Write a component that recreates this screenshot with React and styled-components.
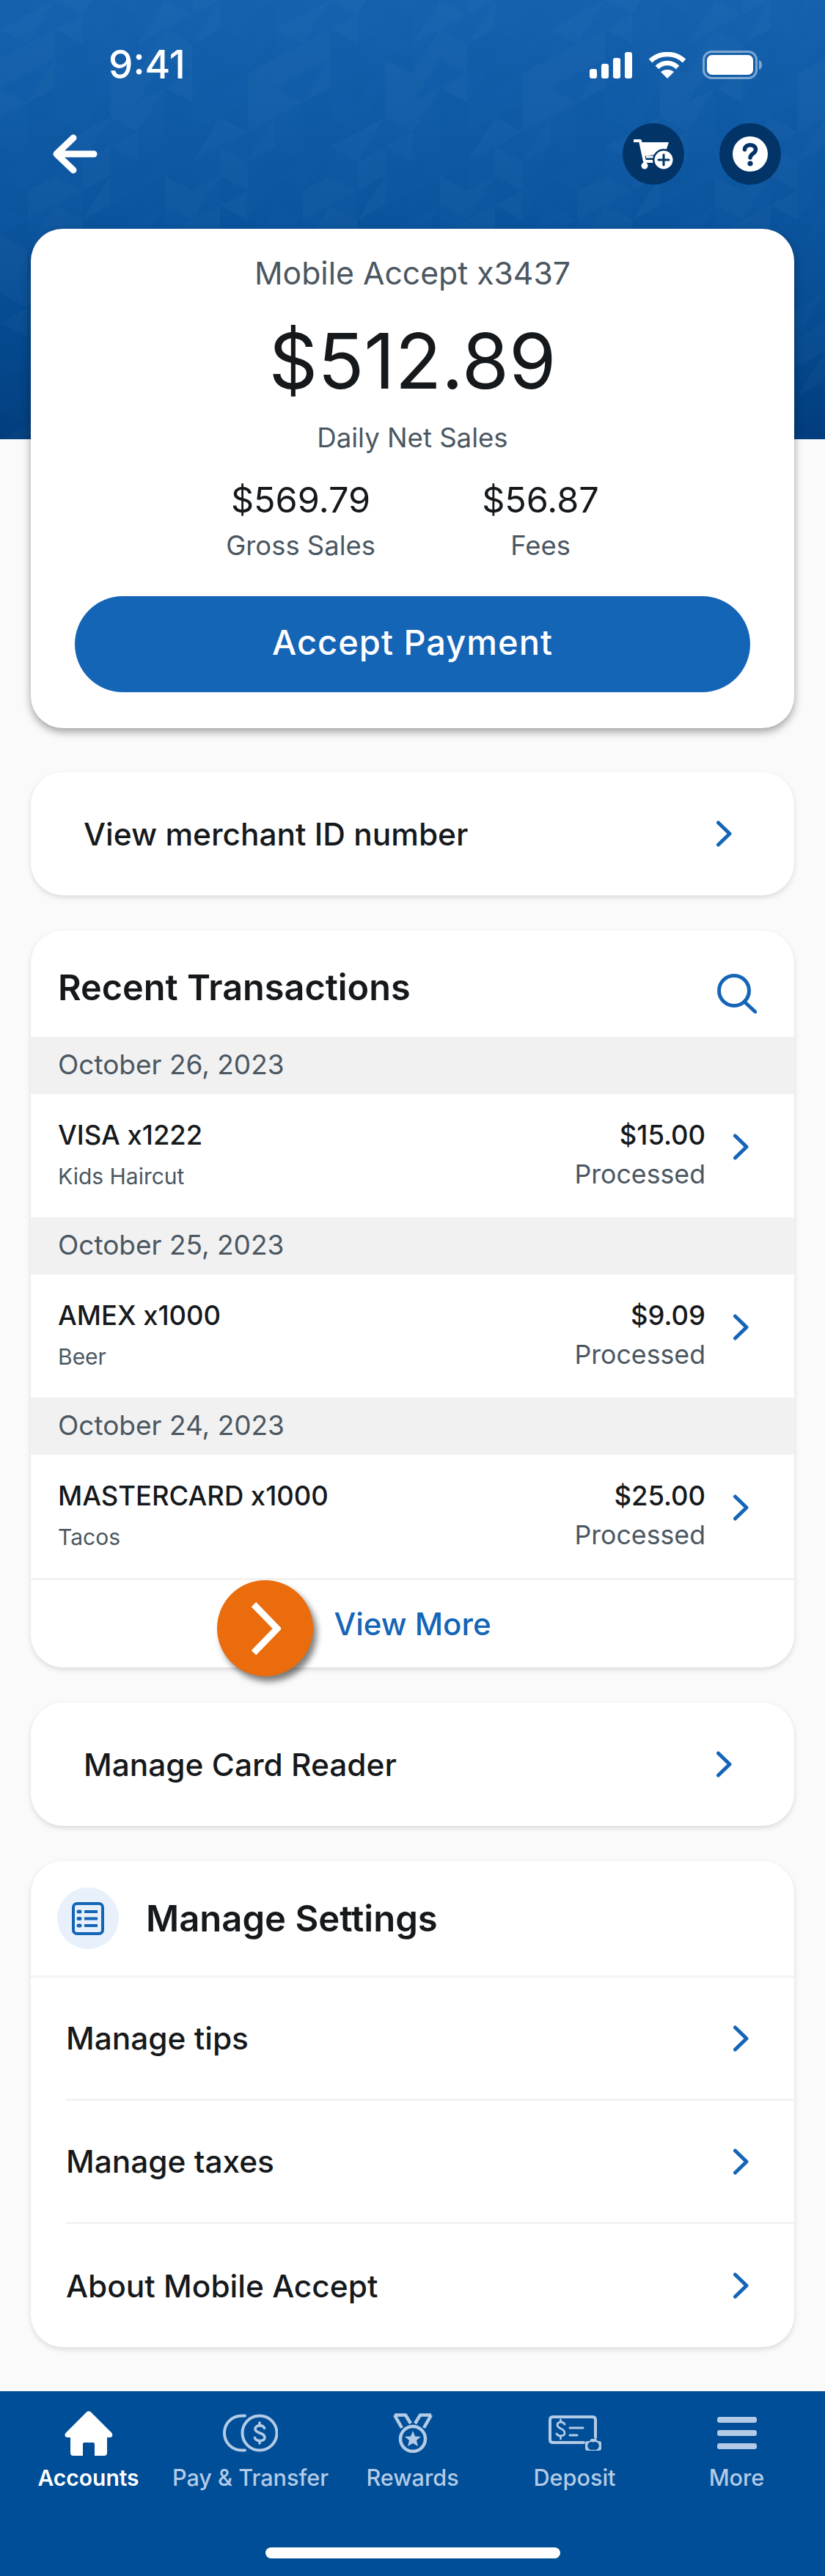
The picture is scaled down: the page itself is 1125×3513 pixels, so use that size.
import React from 'react';
import styled, { createGlobalStyle } from 'styled-components';

const GlobalStyle = createGlobalStyle`
  html, body {
    margin: 0;
    padding: 0;
    background: #fafafa;
  }
  body {
    font-family: Inter, "Noto Sans", sans-serif;
    color: #16191c;
  }
`;

const Page = styled.div`
  width: 1125px;
  min-height: 3513px;
  display: flex;
  flex-direction: column;
  background: #fafafa;
`;

const Hero = styled.header`
  position: relative;
  height: 599px;
  overflow: hidden;
  background: linear-gradient(180deg, #1662af 0%, #0c559f 50%, #054a8f 78%, #033e7e 100%);
`;

const HeroPattern = styled.svg`
  position: absolute;
  inset: 0;
  width: 100%;
  height: 100%;
`;

const StatusBar = styled.div`
  position: relative;
  height: 39px;
  padding: 69px 86px 0 148px;
  display: flex;
  align-items: center;
  justify-content: space-between;
`;

const Clock = styled.span`
  color: #fff;
  font-size: 53px;
  font-weight: 500;
  line-height: 39px;
`;

const StatusIcons = styled.div`
  display: flex;
  align-items: center;
  gap: 22px;
`;

const NavBar = styled.div`
  position: relative;
  margin-top: 60px;
  padding: 0 60px 0 72px;
  display: flex;
  align-items: center;
  justify-content: space-between;
`;

const NavActions = styled.div`
  display: flex;
  gap: 48px;
`;

const RoundAction = styled.div`
  width: 84px;
  height: 84px;
  border-radius: 50%;
  background: #033468;
  display: flex;
  align-items: center;
  justify-content: center;
`;

const Cards = styled.main`
  position: relative;
  margin-top: -287px;
  padding: 0 42px;
  display: flex;
  flex-direction: column;
  gap: 48px;
`;

const Card = styled.section`
  position: relative;
  background: #fff;
  border-radius: 44px;
  box-shadow: 0 3px 7px rgba(0, 0, 0, 0.13);
`;

const SummaryCard = styled(Card)`
  height: 681px;
  margin-bottom: 12px;
  display: flex;
  flex-direction: column;
  align-items: center;
  box-shadow: 0 5px 12px rgba(0, 0, 0, 0.36);
`;

const SummaryName = styled.div`
  margin-top: 36px;
  font-size: 42.7px;
  line-height: 50px;
  color: #4b5761;
`;

const SummaryTotal = styled.div`
  margin-top: 39px;
  font-size: 104px;
  line-height: 110px;
  color: #16191c;
`;

const SummaryCaption = styled.div`
  margin-top: 25px;
  font-size: 36.6px;
  line-height: 50px;
  color: #4b5761;
`;

const SummaryStats = styled.div`
  width: 100%;
  margin-top: 30px;
  display: flex;
`;

const Stat = styled.div`
  width: ${(p) => p.$width}px;
  margin-left: ${(p) => p.$left}px;
  display: flex;
  flex-direction: column;
  align-items: center;
`;

const StatValue = styled.div`
  font-size: 48.6px;
  line-height: 60px;
  color: #16191c;
`;

const StatLabel = styled.div`
  margin-top: 9px;
  font-size: 36.4px;
  line-height: 46px;
  color: #4b5761;
`;

const AcceptButton = styled.button`
  width: 921px;
  height: 131px;
  margin-top: 46px;
  padding: 0 0 6px;
  border: none;
  border-radius: 66px;
  background: #1565b7;
  color: #fff;
  font-family: inherit;
  font-size: 47px;
  font-weight: 550;
  letter-spacing: 1px;
`;

const LinkRow = styled.div`
  height: 168px;
  padding: 0 85px 0 72px;
  display: flex;
  align-items: center;
  justify-content: space-between;
  font-size: 42.4px;
  font-weight: 450;
`;

const CardHeader = styled.div`
  height: 145px;
  padding: 0 51px 0 37px;
  display: flex;
  align-items: center;
  justify-content: space-between;
`;

const CardTitle = styled.h2`
  margin: 10px 0 0;
  font-size: 48.6px;
  font-weight: 600;
`;

const SearchSlot = styled.div`
  display: flex;
  margin-top: 26px;
`;

const DateBand = styled.div`
  height: 75px;
  padding: 0 0 3px 37px;
  display: flex;
  align-items: center;
  background: #f1f1f2;
  font-size: 37px;
  color: #4b5761;
`;

const TxnRow = styled.div`
  height: 168px;
  padding: 0 62px 0 37px;
  display: flex;
  align-items: center;
`;

const TxnText = styled.div`
  flex: 1;
  display: flex;
  flex-direction: column;
`;

const TxnAmounts = styled.div`
  display: flex;
  flex-direction: column;
  align-items: flex-end;
  margin-right: 37px;
`;

const TxnTitle = styled.div`
  font-size: 36.4px;
  line-height: 56px;
  color: #16191c;
  font-weight: 450;
`;

const TxnNote = styled.div`
  font-size: 30px;
  line-height: 56px;
  color: #4b5761;
`;

const TxnStatus = styled.div`
  margin: -3px 0 3px;
  font-size: 35.7px;
  line-height: 56px;
  color: #4b5761;
`;

const ChevronSlot = styled.div`
  display: flex;
  margin-top: -24px;
`;

const ViewMoreRow = styled.div`
  position: relative;
  height: 119px;
  border-top: 3px solid #f2f2f2;
  display: flex;
  align-items: center;
  justify-content: center;
  font-size: 42px;
  font-weight: 450;
  color: #1565b7;
`;

const OrangeBubble = styled.div`
  position: absolute;
  left: 254px;
  top: 0;
  width: 131px;
  height: 131px;
  border-radius: 50%;
  background: #ea6c0c;
  box-shadow: 5px 7px 9px rgba(0, 0, 0, 0.5);
  display: flex;
  align-items: center;
  justify-content: center;
`;

const SettingsHeader = styled.div`
  height: 156px;
  padding-left: 36px;
  display: flex;
  align-items: center;
  gap: 37px;
  border-bottom: 3px solid #f2f2f2;
`;

const SettingsTitle = styled.h2`
  margin: 0;
  font-size: 49px;
  font-weight: 600;
`;

const IconBubble = styled.div`
  width: 84px;
  height: 84px;
  border-radius: 50%;
  background: #e8f1fb;
  display: flex;
  align-items: center;
  justify-content: center;
`;

const SettingsRow = styled.div`
  height: ${(p) => (p.$last ? 168 : 165)}px;
  margin-left: 48px;
  padding-right: 62px;
  display: flex;
  align-items: center;
  justify-content: space-between;
  font-size: 42.4px;
  font-weight: 450;
  border-bottom: ${(p) => (p.$last ? 'none' : '3px solid #f2f2f2')};
`;

const TabBar = styled.nav`
  margin-top: auto;
  height: 252px;
  box-sizing: border-box;
  padding: 26px 10px 0;
  background: #004e97;
`;

const TabRow = styled.div`
  display: grid;
  grid-template-columns: repeat(5, 1fr);
`;

const Tab = styled.div`
  display: flex;
  flex-direction: column;
  align-items: center;
  color: ${(p) => (p.$active ? '#fff' : '#b3cbe6')};
`;

const TabIcon = styled.div`
  height: 62px;
  display: flex;
  align-items: center;
  justify-content: center;
`;

const TabLabel = styled.div`
  margin-top: 10px;
  font-size: ${(p) => (p.$active ? 30 : 30.6)}px;
  line-height: 40px;
  font-weight: ${(p) => (p.$active ? 600 : 500)};
  white-space: nowrap;
`;

const HomeIndicator = styled.div`
  width: 402px;
  height: 15px;
  margin: 75px auto 0;
  border-radius: 8px;
  background: #fff;
`;

// triangulated columns behind the header, repeating every 10 columns
const COL = 37.5;
const STEP = 40;
const mosaic = [];
for (let c = 0; c < 31; c++) {
  const left = c * COL;
  const right = left + COL;
  const lift = c % 2 ? 20 : 0;
  for (let k = -1; k < 16; k++) {
    const yL = k * STEP + lift;
    const yR = k * STEP + 20 - lift;
    const shapes = [
      `${left},${yL} ${right},${yR} ${left},${yL + STEP}`,
      `${right},${yR} ${left},${yL + STEP} ${right},${yR + STEP}`,
    ];
    shapes.forEach((pts, i) => {
      const v = Math.sin(1.257 * c + 0.9 * k) + Math.sin(2.513 * c - 1.4 * k + i * 1.7);
      if (Math.abs(v) < 0.5) return;
      mosaic.push({ pts, fill: v > 0 ? '#fff' : '#002a66', key: `${c}-${k}-${i}` });
    });
  }
}

const SignalIcon = () => (
  <svg width="58" height="36" viewBox="0 0 58 36" fill="#fff">
    <rect x="0" y="23" width="10" height="13" rx="3" />
    <rect x="16" y="16" width="10" height="20" rx="3" />
    <rect x="32" y="8" width="10" height="28" rx="3" />
    <rect x="48" y="0" width="10" height="36" rx="3" />
  </svg>
);

const WifiIcon = () => (
  <svg width="52" height="36" viewBox="0 0 52 36" fill="none" stroke="#fff" strokeWidth="6.5">
    <path d="M3 12 C16 0 36 0 49 12" />
    <path d="M12 21 C20 13 32 13 40 21" />
    <path d="M26 36 L17 27 C22 23 30 23 35 27 Z" fill="#fff" stroke="none" />
  </svg>
);

const BatteryIcon = () => (
  <svg width="81" height="39" viewBox="0 0 81 39">
    <rect x="1.5" y="1.5" width="72" height="36" rx="11" fill="none" stroke="#fff" strokeOpacity="0.45" strokeWidth="3" />
    <rect x="6" y="6" width="63" height="27" rx="7" fill="#fff" />
    <path d="M77 13 C80 14 81 16 81 19.5 C81 23 80 25 77 26 Z" fill="#fff" fillOpacity="0.45" />
  </svg>
);

const BackArrow = () => (
  <svg width="61" height="54" viewBox="0 0 61 54" fill="none" stroke="#fff" strokeWidth="9" strokeLinecap="round" strokeLinejoin="round">
    <path d="M28 5 L5 27 L28 49" />
    <path d="M6 27 H56" />
  </svg>
);

const CartPlusIcon = () => (
  <svg width="54" height="42" viewBox="0 0 54 42">
    <path d="M1 3 H9 L15 31 H33" fill="none" stroke="#fff" strokeWidth="4" strokeLinecap="round" strokeLinejoin="round" />
    <path d="M11 5 H48 L43 20 L15 24 Z" fill="#fff" />
    <path d="M17 25 H36" stroke="#fff" strokeWidth="3" />
    <circle cx="15" cy="37" r="4.5" fill="#fff" />
    <circle cx="41" cy="29" r="15" fill="#033468" />
    <circle cx="41" cy="29" r="12.5" fill="#fff" />
    <path d="M41 22 V36 M34 29 H48" stroke="#033468" strokeWidth="3" strokeLinecap="round" />
  </svg>
);

const HelpIcon = () => (
  <svg width="48" height="48" viewBox="0 0 48 48">
    <circle cx="24" cy="24" r="24" fill="#fff" />
    <path d="M16.5 18 C16.5 9.5 31.5 9.5 31.5 18 C31.5 23.5 24 23.5 24 29" fill="none" stroke="#033468" strokeWidth="5.5" strokeLinecap="round" />
    <circle cx="24" cy="37" r="3.6" fill="#033468" />
  </svg>
);

const Chevron = () => (
  <svg width="22" height="36" viewBox="0 0 22 36" fill="none" stroke="#1565b7" strokeWidth="5" strokeLinecap="round" strokeLinejoin="round">
    <path d="M3.5 3 L19 18 L3.5 33" />
  </svg>
);

const SearchIcon = () => (
  <svg width="54" height="54" viewBox="0 0 54 54" fill="none" stroke="#1565b7" strokeWidth="5" strokeLinecap="round">
    <circle cx="23" cy="23" r="20.5" />
    <path d="M37 38 L52 52" />
  </svg>
);

const BubbleChevron = () => (
  <svg width="42" height="72" viewBox="0 0 42 72" fill="none" stroke="#fff" strokeWidth="9">
    <path d="M5 3 L37 36 L5 69" />
  </svg>
);

const ListIcon = () => (
  <svg width="44" height="45" viewBox="0 0 44 45" fill="none" stroke="#1565b7" strokeWidth="4">
    <rect x="2" y="2" width="40" height="41" rx="5" />
    <path d="M17 13 H35 M17 22.5 H35 M17 32 H35" />
    <path d="M9 13 H11 M9 22.5 H11 M9 32 H11" strokeLinecap="round" strokeWidth="5" />
  </svg>
);

const HomeIcon = () => (
  <svg width="66" height="61" viewBox="0 0 66 61" fill="#fff">
    <path d="M30 1.5 L1.5 30 Q-1.5 35 4 36 H8 V57 Q8 61 12 61 H25 V45 Q25 43 27 43 H39 Q41 43 41 45 V61 H54 Q58 61 58 57 V36 H62 Q67 35 64.5 30 L36 1.5 Q33 -1 30 1.5 Z" />
  </svg>
);

const CoinsIcon = () => (
  <svg width="75" height="52" viewBox="0 0 75 52" fill="none" stroke="currentColor" strokeWidth="4" strokeLinecap="round">
    <circle cx="50" cy="26" r="23.5" />
    <path d="M30 2.5 H26 C12 2.5 2 13 2 26 C2 39 12 49.5 26 49.5 H30" />
    <path d="M56.5 19.5 C55 14.5 44 14.5 44 20.5 C44 27 57 25 57 32 C57 38 45 38 43.5 32.5 M50 12 V15 M50 37 V40" strokeWidth="3.6" />
  </svg>
);

const MedalIcon = () => (
  <svg width="54" height="54" viewBox="0 0 54 54" fill="none" stroke="currentColor" strokeWidth="4.5" strokeLinejoin="round">
    <path d="M2 2.5 H17 L24 14 M2 2.5 L12 20" />
    <path d="M52 2.5 H37 L30 14 M52 2.5 L42 20" />
    <ellipse cx="27" cy="35" rx="17" ry="17" />
    <path d="M27 24 L30 31.5 L38 32 L32 37 L34 45 L27 41 L20 45 L22 37 L16 32 L24 31.5 Z" fill="currentColor" stroke="none" />
  </svg>
);

const DepositIcon = () => (
  <svg width="72" height="48" viewBox="0 0 72 48" fill="none" stroke="currentColor" strokeWidth="4" strokeLinecap="round">
    <path d="M48 37 H6 Q2 37 2 33 V6 Q2 2 6 2 H60 Q64 2 64 6 V30" />
    <path d="M29 17 H47 M29 27 H39" strokeWidth="3" />
    <path d="M22 12 C20 8 12 8 12 13 C12 19 22 17 22 24 C22 29 13 29 11 25 M16.5 6 V8 M16.5 29 V32" strokeWidth="2.8" />
    <path fillRule="evenodd" clipRule="evenodd" fill="currentColor" stroke="none" d="M53 35 H56 L58 32 H65 L67 35 H69 Q72 35 72 38 V45 Q72 48 69 48 H53 Q50 48 50 45 V38 Q50 35 53 35 Z M61 36.5 A5.5 5.5 0 1 0 61 46.5 A5.5 5.5 0 1 0 61 36.5 Z" />
  </svg>
);

const MoreIcon = () => (
  <svg width="54" height="44" viewBox="0 0 54 44" fill="currentColor">
    <rect x="0" y="0" width="54" height="8" rx="3" />
    <rect x="0" y="18" width="54" height="8" rx="3" />
    <rect x="0" y="36" width="54" height="8" rx="3" />
  </svg>
);

const transactions = [
  { date: 'October 26, 2023', title: 'VISA x1222', note: 'Kids Haircut', amount: '$15.00' },
  { date: 'October 25, 2023', title: 'AMEX x1000', note: 'Beer', amount: '$9.09' },
  { date: 'October 24, 2023', title: 'MASTERCARD x1000', note: 'Tacos', amount: '$25.00' },
];

const tabs = [
  { label: 'Accounts', icon: <HomeIcon />, active: true },
  { label: 'Pay & Transfer', icon: <CoinsIcon /> },
  { label: 'Rewards', icon: <MedalIcon /> },
  { label: 'Deposit', icon: <DepositIcon /> },
  { label: 'More', icon: <MoreIcon /> },
];

const App = () => (
  <Page>
    <GlobalStyle />
    <Hero>
      <HeroPattern viewBox="0 0 1125 599" preserveAspectRatio="none">
        {mosaic.map((m) => (
          <polygon key={m.key} points={m.pts} fill={m.fill} fillOpacity="0.02" />
        ))}
      </HeroPattern>
      <StatusBar>
        <Clock>9:41</Clock>
        <StatusIcons>
          <SignalIcon />
          <WifiIcon />
          <BatteryIcon />
        </StatusIcons>
      </StatusBar>
      <NavBar>
        <BackArrow />
        <NavActions>
          <RoundAction><CartPlusIcon /></RoundAction>
          <RoundAction><HelpIcon /></RoundAction>
        </NavActions>
      </NavBar>
    </Hero>
    <Cards>
      <SummaryCard>
        <SummaryName>Mobile Accept x3437</SummaryName>
        <SummaryTotal>$512.89</SummaryTotal>
        <SummaryCaption>Daily Net Sales</SummaryCaption>
        <SummaryStats>
          <Stat $left={218} $width={300}>
            <StatValue>$569.79</StatValue>
            <StatLabel>Gross Sales</StatLabel>
          </Stat>
          <Stat $left={27} $width={300}>
            <StatValue>$56.87</StatValue>
            <StatLabel>Fees</StatLabel>
          </Stat>
        </SummaryStats>
        <AcceptButton>Accept Payment</AcceptButton>
      </SummaryCard>
      <Card>
        <LinkRow>
          View merchant ID number
          <Chevron />
        </LinkRow>
      </Card>
      <Card>
        <CardHeader>
          <CardTitle>Recent Transactions</CardTitle>
          <SearchSlot><SearchIcon /></SearchSlot>
        </CardHeader>
        {transactions.map((t) => (
          <React.Fragment key={t.date}>
            <DateBand>{t.date}</DateBand>
            <TxnRow>
              <TxnText>
                <TxnTitle>{t.title}</TxnTitle>
                <TxnNote>{t.note}</TxnNote>
              </TxnText>
              <TxnAmounts>
                <TxnTitle>{t.amount}</TxnTitle>
                <TxnStatus>Processed</TxnStatus>
              </TxnAmounts>
              <ChevronSlot><Chevron /></ChevronSlot>
            </TxnRow>
          </React.Fragment>
        ))}
        <ViewMoreRow>
          View More
          <OrangeBubble><BubbleChevron /></OrangeBubble>
        </ViewMoreRow>
      </Card>
      <Card>
        <LinkRow>
          Manage Card Reader
          <Chevron />
        </LinkRow>
      </Card>
      <Card>
        <SettingsHeader>
          <IconBubble><ListIcon /></IconBubble>
          <SettingsTitle>Manage Settings</SettingsTitle>
        </SettingsHeader>
        <SettingsRow>Manage tips<Chevron /></SettingsRow>
        <SettingsRow>Manage taxes<Chevron /></SettingsRow>
        <SettingsRow $last>About Mobile Accept<Chevron /></SettingsRow>
      </Card>
    </Cards>
    <TabBar>
      <TabRow>
        {tabs.map((tab) => (
          <Tab key={tab.label} $active={tab.active}>
            <TabIcon>{tab.icon}</TabIcon>
            <TabLabel $active={tab.active}>{tab.label}</TabLabel>
          </Tab>
        ))}
      </TabRow>
      <HomeIndicator />
    </TabBar>
  </Page>
);

export default App;
